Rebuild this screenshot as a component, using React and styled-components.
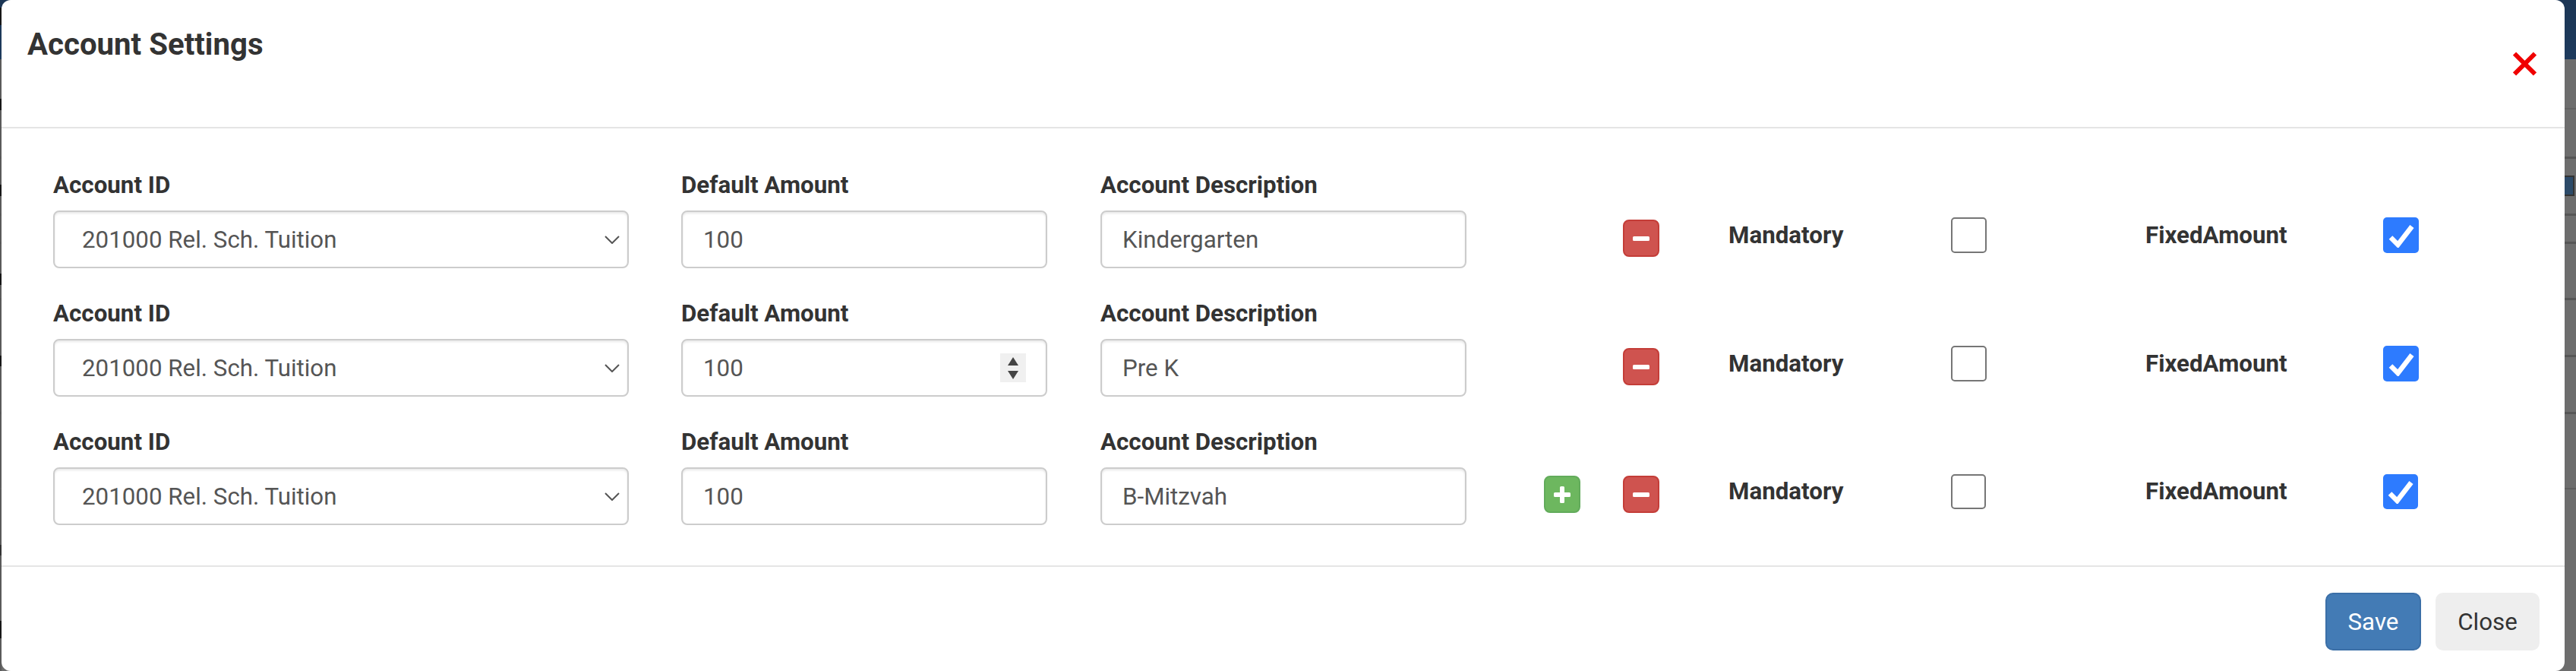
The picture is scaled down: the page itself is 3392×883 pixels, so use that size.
import React from "react";
import styled, { createGlobalStyle } from "styled-components";

const Global = createGlobalStyle`
  html, body { margin: 0; padding: 0; height: 883px; overflow: hidden; }
  body { font-family: Roboto, "Liberation Sans", sans-serif; color: #333; }
  * { box-sizing: border-box; }
`;

const line = (y, c = "#565656", h = 3) =>
  `linear-gradient(${c}, ${c}) right ${y}px / 100% ${h}px no-repeat`;
const spot = (y, h, c = "#161616") =>
  `linear-gradient(${c}, ${c}) left 0 top ${y}px / 2px ${h}px no-repeat`;

const Page = styled.div`
  position: relative;
  height: 883px;
  overflow: hidden;
  padding: 0 15px 0 2px;
  background:
    ${spot(10, 23)}, ${spot(130, 15)}, ${spot(243, 15)}, ${spot(360, 15)}, ${spot(468, 14)},
    ${spot(717, 14, "#333")}, ${spot(817, 23)},
    linear-gradient(#1c3655, #1d3a5c) 0 0 / 100% 78px no-repeat,
    ${line(142, "#626262", 2)}, ${line(206)}, ${line(281)}, ${line(318)}, ${line(392)},
    ${line(467)}, ${line(542)}, ${line(642, "#5e5e5e", 2)},
    linear-gradient(90deg, #5a5a5a 0, #5a5a5a 2px, #6d6d6d 2px, #6d6d6d 100%);
`;

const Tile = styled.div`
  position: absolute;
  right: 2px;
  top: 231px;
  width: 13px;
  height: 27px;
  background: #2c4a68;
  border: 2px solid #333;
  border-left: 0;
`;

const Modal = styled.div`
  position: relative;
  height: 883px;
  background: #fff;
  border-radius: 12px;
  display: flex;
  flex-direction: column;
`;

const Header = styled.header`
  height: 169px;
  border-bottom: 2px solid #e5e5e5;
  padding: 36px 37px 0 34px;
  display: flex;
  justify-content: space-between;
  align-items: flex-start;
`;

const Title = styled.h4`
  margin: 0;
  font-size: 40.2px;
  font-weight: 700;
  line-height: 46px;
  color: #333;
`;

const CloseX = styled.button`
  border: 0;
  background: none;
  padding: 0;
  margin-top: 32px;
  width: 31px;
  height: 32px;
  line-height: 0;
`;

const Body = styled.div`
  height: 575px;
  padding: 42px 0 0 68px;
  display: flex;
  flex-direction: column;
  gap: 27px;
`;

const Row = styled.div`
  display: flex;
  align-items: flex-start;
  height: 142px;
`;

const Field = styled.div`
  width: ${(p) => p.$w}px;
  margin-right: ${(p) => p.$gap}px;
  position: relative;
  flex: none;
`;

const Label = styled.label`
  display: block;
  height: 66px;
  font-size: 31.3px;
  font-weight: 700;
  line-height: 66px;
  color: #333;
`;

const inputCss = `
  display: block;
  width: 100%;
  height: 76px;
  border: 2px solid #ccc;
  border-radius: 8px;
  box-shadow: inset 0 2px 3px rgba(0,0,0,.09);
  background: #fff;
  color: #555;
  font-family: Roboto, "Liberation Sans", sans-serif;
  font-size: 31.3px;
  outline: none;
`;

const Select = styled.select`
  ${inputCss}
  appearance: none;
  padding: 0 36px;
`;

const TextInput = styled.input`
  ${inputCss}
  padding: 0 27px;
`;

const Chevron = styled.svg`
  position: absolute;
  right: 12px;
  bottom: 32px;
  width: 20px;
  height: 11px;
  pointer-events: none;
`;

const Spinner = styled.div`
  position: absolute;
  right: 28px;
  bottom: 19px;
  width: 34px;
  height: 38px;
  background: #f0f0f0;
  display: flex;
  flex-direction: column;
  align-items: center;
  justify-content: center;
  gap: 7px;
`;

const Tri = styled.svg`
  width: 14px;
  height: 11px;
  display: block;
`;

const Actions = styled.div`
  width: 345px;
  margin-top: ${(p) => p.$top}px;
  padding: 0 91px 0 102px;
  display: flex;
  justify-content: space-between;
  flex: none;
`;

const IconBtn = styled.button`
  width: 48px;
  height: 49px;
  border-radius: 8px;
  border: 2px solid ${(p) => (p.$add ? "#62ab5b" : "#c43d38")};
  background: ${(p) => (p.$add ? "#6db75f" : "#cf534f")};
  padding: 0;
  display: flex;
  align-items: center;
  justify-content: center;
  margin-left: ${(p) => (p.$alone ? "auto" : "0")};
`;

const Options = styled.div`
  display: flex;
  align-items: center;
  margin-top: ${(p) => p.$top}px;
  flex: none;
`;

const OptionLabel = styled.span`
  display: block;
  width: ${(p) => p.$w}px;
  font-size: 31.3px;
  font-weight: 700;
  line-height: 40px;
  color: #333;
`;

const Box = styled.span`
  display: flex;
  align-items: center;
  justify-content: center;
  flex: none;
  width: ${(p) => p.$size}px;
  height: ${(p) => p.$size}px;
  border-radius: 5px;
  border: ${(p) => (p.$on ? "0" : "2px solid #767676")};
  background: ${(p) => (p.$on ? "#2d7bff" : "#fff")};
  margin-right: ${(p) => p.$gap || 0}px;
`;

const Footer = styled.footer`
  border-top: 2px solid #e5e5e5;
  flex: 1;
  padding: 34px 33px 0 0;
  display: flex;
  justify-content: flex-end;
  align-items: flex-start;
  gap: 19px;
`;

const Btn = styled.button`
  height: 76px;
  width: ${(p) => p.$w}px;
  border-radius: 10px;
  font-family: Roboto, "Liberation Sans", sans-serif;
  font-size: 31.3px;
  padding: 0;
  color: ${(p) => (p.$primary ? "#fff" : "#333")};
  background: ${(p) => (p.$primary ? "#437bb5" : "#eee")};
  border: 2px solid ${(p) => (p.$primary ? "#3b6fa7" : "#eee")};
`;

const MinusIcon = () => (
  <svg width="22" height="6" viewBox="0 0 22 6"><rect width="22" height="6" rx="1.5" fill="#fff" /></svg>
);
const PlusIcon = () => (
  <svg width="22" height="22" viewBox="0 0 22 22">
    <path d="M8 1.5A1.5 1.5 0 0 1 9.5 0h3A1.5 1.5 0 0 1 14 1.5V8h6.500A1.500 1.500 0 0 1 22 9.500v3a1.500 1.500 0 0 1-1.500 1.500H14v6.500a1.500 1.500 0 0 1-1.500 1.500h-3A1.500 1.500 0 0 1 8 20.500V14H1.500A1.500 1.500 0 0 1 0 12.500v-3A1.500 1.500 0 0 1 1.500 8H8z" fill="#fff" />
  </svg>
);
const CheckIcon = () => (
  <svg width="34" height="32" viewBox="0 0 34 32"><path d="M3 18.500 L12.500 28 L31 4" fill="none" stroke="#fff" strokeWidth="6.500" /></svg>
);

const rows = [
  { desc: "Kindergarten", btnTop: 78, optTop: 75, size: 47 },
  { desc: "Pre K", spin: true, btnTop: 78, optTop: 75, size: 47 },
  { desc: "B-Mitzvah", add: true, btnTop: 77, optTop: 75, size: 46 },
];

export default function App() {
  return (
    <>
      <Global />
      <Page>
        <Tile />
        <Modal>
          <Header>
            <Title>Account Settings</Title>
            <CloseX aria-label="Close">
              <svg width="31" height="32" viewBox="0 0 31 32">
                <path d="M2 2.500 L29 29.500 M29 2.500 L2 29.500" stroke="#f00000" strokeWidth="6" fill="none" />
              </svg>
            </CloseX>
          </Header>
          <Body>
            {rows.map((r) => (
              <Row key={r.desc}>
                <Field $w={758} $gap={69}>
                  <Label>Account ID</Label>
                  <Select defaultValue="201000">
                    <option value="201000">201000 Rel. Sch. Tuition</option>
                  </Select>
                  <Chevron viewBox="0 0 20 11">
                    <path d="M1 1 L10 10 L19 1" fill="none" stroke="#555" strokeWidth="2" />
                  </Chevron>
                </Field>
                <Field $w={482} $gap={70}>
                  <Label>Default Amount</Label>
                  <TextInput readOnly value="100" />
                  {r.spin && (
                    <Spinner>
                      <Tri viewBox="0 0 14 11"><path d="M7 0 L14 11 L0 11 Z" fill="#444" /></Tri>
                      <Tri viewBox="0 0 14 11"><path d="M0 0 L14 0 L7 11 Z" fill="#444" /></Tri>
                    </Spinner>
                  )}
                </Field>
                <Field $w={482} $gap={0}>
                  <Label>Account Description</Label>
                  <TextInput readOnly value={r.desc} />
                </Field>
                <Actions $top={r.btnTop}>
                  {r.add && <IconBtn $add><PlusIcon /></IconBtn>}
                  <IconBtn $alone={!r.add}><MinusIcon /></IconBtn>
                </Actions>
                <Options $top={r.optTop}>
                  <OptionLabel $w={293}>Mandatory</OptionLabel>
                  <Box $size={r.size} $gap={209 - (r.size - 47)} />
                  <OptionLabel $w={313}>FixedAmount</OptionLabel>
                  <Box $on $size={r.size}><CheckIcon /></Box>
                </Options>
              </Row>
            ))}
          </Body>
          <Footer>
            <Btn $primary $w={126}>Save</Btn>
            <Btn $w={137}>Close</Btn>
          </Footer>
        </Modal>
      </Page>
    </>
  );
}
